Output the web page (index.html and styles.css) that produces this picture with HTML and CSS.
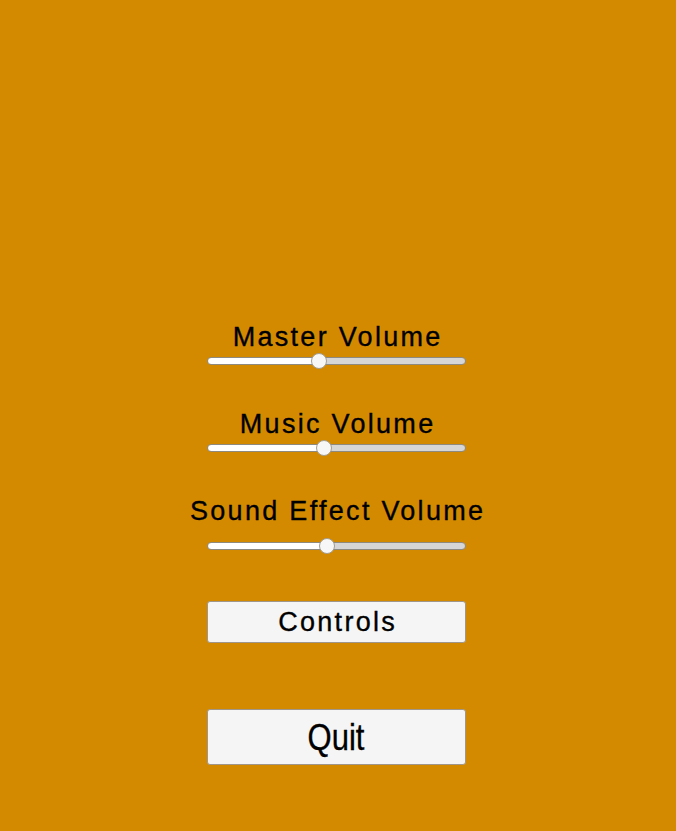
FILE: index.html
```html
<!DOCTYPE html>
<html>
<head>
<meta charset="utf-8">
<link rel="stylesheet" href="styles.css">
</head>
<body>
<main class="menu">
  <section class="group group-master">
    <div class="label">Master Volume</div>
    <div class="slider" style="--v:0.426">
      <div class="track"></div>
      <div class="handle"></div>
    </div>
  </section>
  <section class="group group-music">
    <div class="label">Music Volume</div>
    <div class="slider" style="--v:0.449">
      <div class="track"></div>
      <div class="handle"></div>
    </div>
  </section>
  <section class="group group-sound">
    <div class="label">Sound Effect Volume</div>
    <div class="slider slider-low" style="--v:0.461">
      <div class="track"></div>
      <div class="handle"></div>
    </div>
  </section>
  <button class="btn btn-controls">Controls</button>
  <button class="btn btn-quit"><span class="quit-text">Quit</span></button>
</main>
</body>
</html>
```
FILE: styles.css
```css
html, body {
  margin: 0;
  padding: 0;
  background: #d38a00;
  height: 100%;
}
body {
  font-family: "Liberation Sans", Arial, sans-serif;
  color: #000;
}
.menu {
  display: flex;
  flex-direction: column;
  align-items: center;
  padding-top: 322px;
  padding-right: 3px;
}
.group {
  display: flex;
  flex-direction: column;
  align-items: center;
  width: 259px;
}
.group-music { margin-top: 40px; }
.group-sound { margin-top: 40px; }
.label {
  font-size: 27px;
  line-height: 30px;
  letter-spacing: 2.3px;
  white-space: nowrap;
  margin-right: -2.3px;
  -webkit-text-stroke: 0.35px #000;
}
.slider {
  position: relative;
  width: 259px;
  height: 16px;
  display: flex;
  align-items: center;
  margin-top: 1px;
}
.slider-low { margin-top: 12px; }
.track {
  box-sizing: border-box;
  width: 100%;
  height: 8px;
  border: 1px solid #8f8a80;
  border-radius: 4px;
  background: linear-gradient(to right, #ffffff 0, #ffffff calc(8px + var(--v) * (100% - 16px)), #d6d6d6 calc(8px + var(--v) * (100% - 16px)), #d6d6d6 100%);
}
.handle {
  position: absolute;
  top: 0;
  left: calc(var(--v) * (100% - 16px));
  box-sizing: border-box;
  width: 16px;
  height: 16px;
  border-radius: 50%;
  background: #f7f7f7;
  border: 1px solid #a39c90;
}
.btn {
  box-sizing: border-box;
  width: 259px;
  background: #f5f5f5;
  border: 1px solid #a0978a;
  border-radius: 3px;
  font-family: "Liberation Sans", Arial, sans-serif;
  color: #000;
  padding: 0;
  display: flex;
  align-items: center;
  justify-content: center;
  -webkit-text-stroke: 0.35px #000;
}
.btn-controls {
  margin-top: 47px;
  height: 42px;
  font-size: 27px;
  letter-spacing: 2.3px;
  padding-left: 2.3px;
}
.btn-quit {
  margin-top: 66px;
  height: 56px;
  font-size: 36px;
  padding-top: 2px;
}
.quit-text {
  display: inline-block;
  transform: scaleX(0.86);
}
```
